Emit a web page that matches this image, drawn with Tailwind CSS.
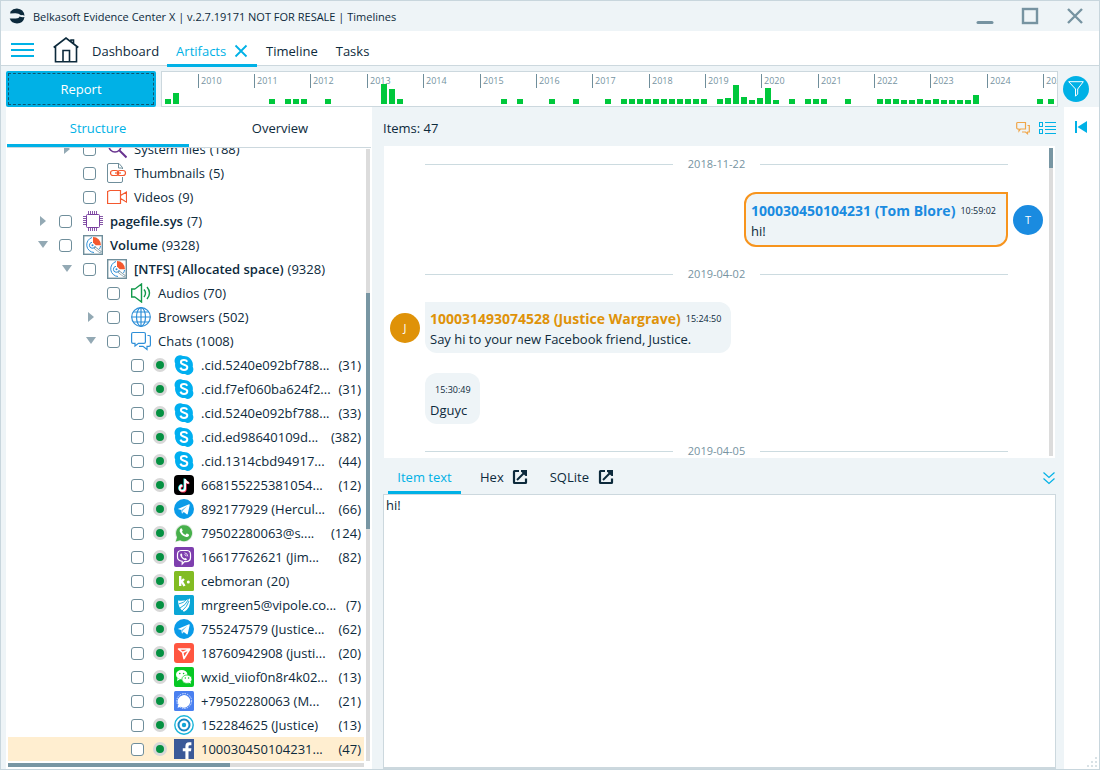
<!DOCTYPE html>
<html lang="en">
<head>
    <meta charset="UTF-8">
    <meta name="viewport" content="width=device-width, initial-scale=1.0">
    <title>Belkasoft Evidence Center X</title>
    <script src="https://cdn.jsdelivr.net/npm/@tailwindcss/browser@4"></script>
</head>
<body class="bg-[#eef4f7] font-['Open_Sans','Noto_Sans',sans-serif] text-[13px] leading-5 text-[#0d2a3c]">

    <!-- Icons shared by the tree and the chat view -->
    <svg class="hidden">
        <symbol id="i-search" viewBox="0 0 20 20"><g fill="none" stroke="#68338f" stroke-width="1.6"><circle cx="8" cy="7" r="6"/><path d="M12.5 11.5l7 7" stroke-width="2"/></g></symbol>
        <symbol id="i-thumb" viewBox="0 0 20 20"><path d="M15.500 6V4.500L12 .5H2Q.5.5.5 2v16q0 1.500 1.500 1.500h12q1.500 0 1.500-1.500v-4M11.500.5V5h4" fill="none" stroke="#6f8e9b"/><g fill="none" stroke="#f4592f" stroke-width="1.200"><rect x="3.500" y="7.500" width="8" height="5" rx="2.500"/><rect x="10.500" y="7.500" width="8" height="5" rx="2.500"/><path d="M8 10h6"/></g></symbol>
        <symbol id="i-video" viewBox="0 0 20 20"><path d="M.6 4.500L3 3.500h10.500v13H.6zM13.500 8.500l6-3.500v10l-6-3.500" fill="none" stroke="#f4592f" stroke-width="1.200"/></symbol>
        <symbol id="i-chip" viewBox="0 0 20 20"><path d="M5.500 0v3M7.500 0v3M9.500 0v3M11.500 0v3M13.500 0v3M5.500 17v3M7.500 17v3M9.500 17v3M11.500 17v3M13.500 17v3M0 5.500h3M0 7.500h3M0 9.500h3M0 11.500h3M0 13.500h3M17 5.500h3M17 7.500h3M17 9.500h3M17 11.500h3M17 13.500h3" stroke="#8757a8"/><rect x="3.500" y="3.500" width="13" height="13" rx="1" fill="#fff" stroke="#7a3f9f"/></symbol>
        <symbol id="i-disk" viewBox="0 0 20 20"><rect x=".7" y=".7" width="18.600" height="18.600" fill="#fff" stroke="#6f8e9b" stroke-width="1.400"/><g fill="none" stroke="#2e8fd8"><path d="M9 2.500a7.700 7.700 0 0 0 2 15M17.500 11a8 8 0 0 1-1 3"/><path d="M9 7.300a3 3 0 1 0 3.300 3.700"/></g><circle cx="9.500" cy="10.300" r="1" fill="#2e8fd8"/><path d="M10 2a8 8 0 0 1 8 8.300h-5.300L10 7.500z" fill="#f4592f"/><path d="M11.500 12.500l6.500 5" stroke="#6f8e9b" stroke-width="2.400"/><path d="M12 13l5.500 4.200" stroke="#fff" stroke-width="1.200"/></symbol>
        <symbol id="i-audio" viewBox="0 0 20 20"><path d="M.7 6v8h3l1.500 1 5.300 4V1L5.200 5l-1.500 1zM13 6.500q3 3.500 0 7.500M16 4q5 6 0 12" fill="none" stroke="#12994b" stroke-width="1.400"/></symbol>
        <symbol id="i-globe" viewBox="0 0 20 20"><g fill="none" stroke="#2e8fd8" stroke-width="1.200"><circle cx="10" cy="10" r="9.300"/><ellipse cx="10" cy="10" rx="4.500" ry="9.300"/><path d="M10 .7v18.600M.7 10h18.600M2.500 5h15M2.500 15h15"/></g></symbol>
        <symbol id="i-chat" viewBox="0 0 20 20"><g fill="none" stroke="#2e8fd8" stroke-width="1.200"><path d="M2 1.500h11q1.400 0 1.400 1.400v8q0 1.400-1.400 1.400H7.500L4 15v-2.700H2q-1.400 0-1.400-1.400v-8Q.6 1.500 2 1.500z"/><path d="M16.500 4.500h1.500q1.400 0 1.400 1.400v8q0 1.400-1.400 1.400h-2V18.500l-4-3.200H8"/></g></symbol>
        <symbol id="i-skype" viewBox="0 0 20 20"><path d="M6 .3a5.500 5.500 0 0 1 3 .7 9 9 0 0 1 9.700 10.800A5.500 5.500 0 0 1 11 19 9 9 0 0 1 1.200 8.500 5.600 5.600 0 0 1 6 .3z" fill="#00aff0"/><path d="M13.300 6.700C12.600 5.500 11.400 5 10 5 8.200 5 6.900 5.900 6.900 7.300c0 3.200 6.400 1.800 6.400 5 0 1.600-1.400 2.600-3.300 2.600-1.800 0-3.100-.8-3.600-2.200" fill="none" stroke="#fff" stroke-width="2"/></symbol>
        <symbol id="i-tiktok" viewBox="0 0 20 20"><rect width="20" height="20" rx="4" fill="#000"/><g fill="none" stroke-width="1.800"><path d="M10.400 3.500v9.200a2.700 2.700 0 1 1-2.700-2.700M10.400 4q.5 3 3.700 3.400" stroke="#25f4ee"/><path d="M11.800 4.700v9.200a2.700 2.700 0 1 1-2.700-2.700M11.800 5q.5 3 3.700 3.400" stroke="#fe2c55"/><path d="M11.100 4v9.200a2.700 2.700 0 1 1-2.700-2.700M11.100 4.500q.5 3 3.700 3.400" stroke="#fff"/></g></symbol>
        <symbol id="i-telegram" viewBox="0 0 20 20"><circle cx="10" cy="10" r="10" fill="#0a9be8"/><path d="M3.800 9.900L15 5.300q.8-.2.7.7l-1.900 8.800q-.3.900-1.100.4l-2.900-2.200-1.500 1.400q-.5.400-.5-.3l-.6-3.100-3.300-1q-.6-.2-.1-.1z" fill="#fff"/><path d="M7.300 11l6-4-4.600 4.800-.5 2.300z" fill="#0a9be8" fill-opacity=".6"/></symbol>
        <symbol id="i-whatsapp" viewBox="0 0 20 20"><path d="M.8 19.500l1.400-5A9 9 0 1 1 6 18.100z" fill="#e4ebe4"/><path d="M1.800 18.400l1.300-4.200a8 8 0 1 1 3 3z" fill="#47b04b"/><path d="M7.300 5.300q.5-.1.700.4l.7 1.700q.1.400-.8 1.400 1.300 2.300 3.500 3.100l1-1.200q.3-.3.700-.1l1.700.9q.5.300.1 1.300-.8 1.400-2.700 1.200-4.400-.8-6.500-5.500-.3-2 .9-3.100z" fill="#fff"/></symbol>
        <symbol id="i-viber" viewBox="0 0 20 20"><rect width="20" height="20" rx="2" fill="#7e3fae"/><path d="M7 3.500h6q3.500.3 3.500 4v3q0 4-4.500 4.200h-1.500L8.200 17v-2.700Q3.500 13.700 3.500 10V7.500q0-3.700 3.500-4z" fill="none" stroke="#fff" stroke-width="1.200"/><path d="M7.300 6.300l1.200 1.800-.6 1q.9 1.900 2.500 2.500l.8-.7 1.800 1.100q-.5 1.500-1.800 1.200-4-1.300-5-5.200 0-1.200 1.100-1.700z" fill="#fff"/><path d="M10.500 5.800q3 .2 3.300 3.600M10.500 7.500q1.500.2 1.700 1.800" fill="none" stroke="#fff" stroke-width=".8"/></symbol>
        <symbol id="i-kik" viewBox="0 0 20 20"><rect width="20" height="20" rx="1.500" fill="#82bc23"/><path d="M6.200 5v10M6.500 11.500L10 8M7.500 10l3 5" stroke="#fff" stroke-width="2.400" fill="none"/><circle cx="14.300" cy="11" r="1.500" fill="#fff"/></symbol>
        <symbol id="i-vipole" viewBox="0 0 20 20"><rect width="20" height="20" rx="1.500" fill="#0ba6d6"/><path d="M4 5.500Q11 6.500 16 3.500 17 13 10 16.800 4 13.500 4 5.500z" fill="#fff"/><path d="M4.500 9Q10 8 12.500 4.500M6 13q5.500-2.500 8.500-8.500M8 16q5-4 7-10" fill="none" stroke="#0ba6d6" stroke-width=".9"/></symbol>
        <symbol id="i-plane" viewBox="0 0 20 20"><rect width="20" height="20" rx="3" fill="#ff5640"/><path d="M4.500 6h11.300L10 15.700 8.700 9.500zM8.700 9.500l6.500-3" fill="none" stroke="#fff" stroke-width="1.600" stroke-linejoin="round"/></symbol>
        <symbol id="i-wechat" viewBox="0 0 20 20"><rect width="20" height="20" rx="2" fill="#07c824"/><ellipse cx="7.700" cy="7.700" rx="5.700" ry="4.800" fill="#fff"/><path d="M3.500 11l-.5 3 3-1.700z" fill="#fff"/><ellipse cx="12.900" cy="12.200" rx="5" ry="4.200" fill="#fff" stroke="#07c824" stroke-width=".7"/><path d="M14.500 15.500l2.500 1.200-.5-2.200z" fill="#fff"/><g fill="#07c824"><circle cx="5.800" cy="6.500" r=".8"/><circle cx="9.600" cy="6.500" r=".8"/><circle cx="11.300" cy="11" r=".7"/><circle cx="14.600" cy="11" r=".7"/></g></symbol>
        <symbol id="i-signal" viewBox="0 0 20 20"><rect width="20" height="20" rx="1.500" fill="#4a80f0"/><path d="M3.500 16.800l1-3.300a6.300 6.300 0 1 1 2.300 2.300z" fill="#fff"/><circle cx="10.200" cy="10" r="7.400" fill="none" stroke="#fff" stroke-width=".8" stroke-dasharray="1.500 1"/></symbol>
        <symbol id="i-target" viewBox="0 0 20 20"><circle cx="10" cy="10" r="9.200" fill="#fff" stroke="#19b5d9" stroke-width="1.400"/><circle cx="10" cy="10" r="5.500" fill="none" stroke="#1787c4" stroke-width="2"/><circle cx="10" cy="10" r="2.200" fill="#12a5d6"/></symbol>
        <symbol id="i-facebook" viewBox="0 0 20 20"><rect width="20" height="20" fill="#3b5998"/><path d="M11.400 20v-7.700H8.800V9.300h2.600V7.200q0-3.900 3.700-3.900h2.300v2.900h-1.500q-1.400 0-1.400 1.400v1.700h2.900l-.4 3h-2.500V20z" fill="#fff"/></symbol>
        <symbol id="i-open" viewBox="0 0 16 16"><path d="M7 2H2.500Q2 2 2 2.500v11q0 .5.5.5h11q.5 0 .5-.5V9.500" fill="none" stroke="#0d2a3c" stroke-width="2.200"/><path d="M5 11l8-8" stroke="#0d2a3c" stroke-width="2"/><path d="M9 1h6v6h-1.500L9 2.500z" fill="#0d2a3c"/></symbol>
    </svg>

    <div class="flex h-screen flex-col border border-[#c8d6dd]">

        <header class="flex h-[30px] shrink-0 items-center px-2">
            <svg class="size-4 shrink-0" viewBox="0 0 16 16"><path d="M1.500 3.500Q4 .5 8 .6q6.800.5 7.500 7.200-2-1.300-3.500-.6Q9.500 5 6 5.200L1.200 5.500z" fill="#0d2a3c"/><path d="M.7 10.500h6q3.500-.2 3.800-2 2.500 1 5 .5Q14.500 15.300 8 15.500 2.500 15.300.7 10.500z" fill="#0d2a3c"/></svg>
            <h1 class="ml-2 grow pt-px text-[11px]">Belkasoft Evidence Center X | v.2.7.19171 NOT FOR RESALE | Timelines</h1>
            <div class="flex items-center gap-[27px] pr-[7px]">
                <button aria-label="Minimize"><svg class="size-[18px]" viewBox="0 0 18 18"><path d="M2 15.500h14" stroke="#7693a1" stroke-width="3" stroke-linecap="round"/></svg></button>
                <button aria-label="Maximize"><svg class="size-[18px]" viewBox="0 0 18 18"><rect x="2" y="2" width="14" height="14" fill="none" stroke="#7693a1" stroke-width="2.400"/></svg></button>
                <button aria-label="Close"><svg class="size-[18px]" viewBox="0 0 18 18"><path d="M2 2l14 14M16 2L2 16" stroke="#7693a1" stroke-width="2.400"/></svg></button>
            </div>
        </header>

        <nav class="flex h-[35px] shrink-0 border-b border-[#ccd8de] bg-white pl-[10px]">
            <button aria-label="Menu" class="mr-[19px] flex items-center pt-1"><svg class="h-4 w-[23px]" viewBox="0 0 23 16"><path d="M0 2h23M0 8h23M0 14h23" stroke="#00b1e6" stroke-width="2"/></svg></button>
            <a href="#" aria-label="Home" class="mr-[13px] flex items-center pt-1"><svg class="size-[26px]" viewBox="0 0 26 26"><path d="M2.500 9v15.700h21V9M.7 10.500L13 1l12.300 9.500M18 4.500V3h2.500v3.500M10 24.500v-11h6.500v11" fill="none" stroke="#0d2a3c" stroke-width="1.600"/></svg></a>
            <a href="#" class="mr-2 flex items-center pt-[6px]">Dashboard</a>
            <div class="-mb-[2px] flex w-[90px] items-center border-b-3 border-[#00b1e6] pt-[7px] pl-[9px] text-[#00b1e6]">
                <a href="#">Artifacts</a>
                <button aria-label="Close tab" class="ml-2"><svg class="size-[14px]" viewBox="0 0 14 14"><path d="M1.500 1.500l11 11M12.500 1.500l-11 11" stroke="#00b1e6" stroke-width="1.800"/></svg></button>
            </div>
            <a href="#" class="ml-[9px] flex items-center pt-[6px]">Timeline</a>
            <a href="#" class="ml-[18px] flex items-center pt-[6px]">Tasks</a>
        </nav>

        <div class="flex h-[41px] shrink-0 items-end pl-[5px]">
            <button class="h-9 w-[150px] shrink-0 rounded-[2px] bg-[#00b1e6] p-[2px] text-white"><span class="flex h-full items-center justify-center border border-dashed border-[#10566f]">Report</span></button>
            <div class="ml-[5px] h-9 min-w-0 grow border border-[#ccd8de] bg-white">
                <svg id="timeline" class="block size-full"></svg>
            </div>
            <button aria-label="Filter" class="mr-[10px] mb-[5px] ml-[5px] flex size-[26px] items-center justify-center rounded-full bg-[#00b1e6]">
                <svg class="size-4" viewBox="0 0 16 16"><path d="M.7.700h14.600L9.700 8v5l-2.200 2.200V8z" fill="none" stroke="#fff"/></svg>
            </button>
        </div>

        <main class="flex min-h-0 grow">
            <section class="ml-[5px] flex w-[366px] shrink-0 flex-col bg-white pl-px">
                <div class="mr-px flex h-[41px] shrink-0 border-b border-[#ccd8de]">
                    <button class="w-[182px] border-b-3 border-[#00b1e6] pt-1 text-[#00b1e6]">Structure</button>
                    <button class="grow border-b-3 border-transparent pt-1">Overview</button>
                </div>
                <div class="ml-px flex min-h-0 grow overflow-hidden pt-px">
                    <ul id="tree" class="-mt-3 min-w-0 grow"></ul>
                    <div class="mr-[2px] ml-[2px] h-[612px] w-1 bg-[#dcdcdc]"><div class="mt-[144px] h-[236px] w-full bg-[#7896a3]"></div></div>
                </div>
                <div class="mr-2 mb-[2px] ml-px h-1 shrink-0 bg-[#dcdcdc]"><div class="h-full w-[222px] bg-[#7896a3]"></div></div>
            </section>

            <section class="flex min-w-0 grow flex-col pl-[11px]">
                <div class="flex h-[39px] shrink-0 items-center pt-[2px] pr-2">
                    <h2 class="grow">Items: 47</h2>
                    <button aria-label="Chat view" class="mr-2"><svg class="size-[14px]" viewBox="0 0 14 14"><g fill="none" stroke="#f0a64a" stroke-width="1.200"><path d="M1.500 1.500h8v6.500h-5L3 10V8H1.500L.7 7V2z"/><path d="M11.500 4.500h1.800v6.500h-1.800v1.700L9.500 11H6"/></g></svg></button>
                    <button aria-label="List view"><svg class="h-[14px] w-[18px]" viewBox="0 0 18 14"><g fill="none" stroke="#00b1e6"><rect x="1.500" y="1.500" width="3" height="4"/><rect x="1.500" y="8.500" width="3" height="4"/><path d="M7 1.500h11M7 5.500h11M7 8.500h11M7 12.500h11"/></g></svg></button>
                </div>

                <div class="mr-[9px] ml-px flex h-[312px] shrink-0 overflow-hidden bg-white">
                    <div class="flex min-w-0 grow flex-col pt-2">
                        <div class="mx-[41px] flex items-center gap-[15px] text-[11px] text-[#7693a1]"><hr class="grow border-[#ccdbe0]">2018-11-22<hr class="grow border-[#ccdbe0]"></div>
                        <div class="mt-[18px] flex items-center justify-end gap-[5px] pr-[6px]">
                            <article class="rounded-xl rounded-tr-none border-2 border-[#f7941d] bg-[#eef4f7] px-[5px] pt-[7px] pb-1">
                                <p class="flex h-5 items-center gap-[5px] pr-[5px]"><b class="text-[14px] text-[#1a8be0]">100030450104231 (Tom Blore)</b> <time class="text-[9px]">10:59:02</time></p>
                                <p>hi!</p>
                            </article>
                            <span class="flex size-[30px] shrink-0 items-center justify-center rounded-full bg-[#1a8be0] text-[11px] text-white">T</span>
                        </div>
                        <div class="mx-[41px] mt-[17px] flex items-center gap-[15px] text-[11px] text-[#7693a1]"><hr class="grow border-[#ccdbe0]">2019-04-02<hr class="grow border-[#ccdbe0]"></div>
                        <div class="mt-[18px] flex items-center gap-[5px] pl-[6px]">
                            <span class="flex size-[30px] shrink-0 items-center justify-center rounded-full bg-[#df9208] text-[11px] text-white">J</span>
                            <article class="rounded-xl rounded-tl-none bg-[#eef4f7] px-[5px] pt-[7px] pb-1">
                                <p class="flex h-5 items-center gap-[5px] pr-[5px]"><b class="text-[14px] text-[#df9208]">100031493074528 (Justice Wargrave)</b> <time class="text-[9px]">15:24:50</time></p>
                                <p>Say hi to your new Facebook friend, Justice.</p>
                            </article>
                        </div>
                        <article class="mt-5 ml-[41px] self-start rounded-xl bg-[#eef4f7] px-[5px] pt-[7px] pb-1">
                            <p class="flex h-5 items-center pr-[4px] pl-[5px]"><time class="text-[9px]">15:30:49</time></p>
                            <p>Dguyc</p>
                        </article>
                        <div class="mx-[41px] mt-[17px] flex items-center gap-[15px] text-[11px] text-[#7693a1]"><hr class="grow border-[#ccdbe0]">2019-04-05<hr class="grow border-[#ccdbe0]"></div>
                    </div>
                    <div class="my-[2px] mr-[2px] w-1 shrink-0 bg-[#dcdcdc]"><div class="h-5 w-full bg-[#7896a3]"></div></div>
                </div>

                <div class="flex h-9 shrink-0 pr-2 pl-[5px]">
                    <button class="w-[73px] border-b-3 border-[#00b1e6] pt-1 text-[#00b1e6]">Item text</button>
                    <button class="ml-[19px] flex items-center gap-2 pt-[2px]">Hex <svg class="size-4"><use href="#i-open"/></svg></button>
                    <button class="ml-[22px] flex items-center gap-[9px] pt-[2px]">SQLite <svg class="size-4"><use href="#i-open"/></svg></button>
                    <button aria-label="Collapse" class="ml-auto flex items-center pt-1"><svg class="size-[14px]" viewBox="0 0 14 14"><path d="M1.500 1.500L7 6.500l5.500-5M1.500 7.500l5.500 5 5.500-5" fill="none" stroke="#00b1e6" stroke-width="1.200"/></svg></button>
                </div>
                <textarea aria-label="Item text" class="mr-2 min-h-0 grow resize-none border border-b-2 border-[#ccd8de] bg-white px-[2px] outline-none">hi!</textarea>
            </section>

            <aside class="flex w-[35px] shrink-0 flex-col justify-between bg-white">
                <button aria-label="Expand panel" class="mt-[13px] ml-[10px]"><svg class="size-[14px]" viewBox="0 0 14 14"><path d="M2 1v12" stroke="#00b1e6" stroke-width="2"/><path d="M13 1v12L3.500 7z" fill="#00b1e6"/></svg></button>
                <svg class="mr-[2px] mb-[2px] size-[10px] self-end" viewBox="0 0 10 10"><path d="M8 0h2v2H8zM4 4h2v2H4zM8 4h2v2H8zM0 8h2v2H0zM4 8h2v2H4zM8 8h2v2H8z" fill="#d9e2e6"/></svg>
            </aside>
        </main>
    </div>

    <script>
        // level, arrow, icon, name, count, bold
        const rows = [
            [1, "right", "search", "System files", 188],
            [1, "", "thumb", "Thumbnails", 5],
            [1, "", "video", "Videos", 9],
            [0, "right", "chip", "pagefile.sys", 7, true],
            [0, "down", "disk", "Volume", 9328, true],
            [1, "down", "disk", "[NTFS] (Allocated space)", 9328, true],
            [2, "", "audio", "Audios", 70],
            [2, "right", "globe", "Browsers", 502],
            [2, "down", "chat", "Chats", 1008],
            [3, "", "skype", ".cid.5240e092bf788...", 31],
            [3, "", "skype", ".cid.f7ef060ba624f2...", 31],
            [3, "", "skype", ".cid.5240e092bf788...", 33],
            [3, "", "skype", ".cid.ed98640109d...", 382],
            [3, "", "skype", ".cid.1314cbd94917...", 44],
            [3, "", "tiktok", "668155225381054...", 12],
            [3, "", "telegram", "892177929 (Hercul...", 66],
            [3, "", "whatsapp", "79502280063@s....", 124],
            [3, "", "viber", "16617762621 (Jim...", 82],
            [3, "", "kik", "cebmoran", 20],
            [3, "", "vipole", "mrgreen5@vipole.co...", 7],
            [3, "", "telegram", "755247579 (Justice...", 62],
            [3, "", "plane", "18760942908 (justi...", 20],
            [3, "", "wechat", "wxid_viiof0n8r4k02...", 13],
            [3, "", "signal", "+79502280063 (M...", 21],
            [3, "", "target", "152284625 (Justice)", 13],
            [3, "", "facebook", "100030450104231...", 47],
        ];
        const indent = ["pl-[27px]", "pl-[51px]", "pl-[75px]", "pl-[99px]"];
        const arrows = {
            right: '<button aria-label="Expand" class="flex w-4 justify-center"><svg class="size-2.5" viewBox="0 0 10 10"><path d="M2 0v10l6-5z" fill="#93a9b4"/></svg></button>',
            down: '<button aria-label="Collapse" class="flex w-4 justify-center"><svg class="size-2.5" viewBox="0 0 10 10"><path d="M0 1h10L5 8z" fill="#93a9b4"/></svg></button>',
            "": '<span class="w-4"></span>',
        };

        document.getElementById("tree").innerHTML = rows.map(([level, arrow, icon, name, count, bold]) => {
            const chat = level === 3;
            const selected = icon === "facebook";
            return `<li class="flex h-6 items-center gap-2 pr-[3px] whitespace-nowrap ${indent[level]} ${selected ? "bg-[#ffeed0]" : ""}">
                ${arrows[arrow]}
                <label class="flex min-w-0 grow items-center">
                    <input type="checkbox" class="size-[13px] shrink-0 appearance-none rounded-[3px] border border-[#6f8e9b] bg-white">
                    ${chat ? '<span class="ml-[9px] size-[14px] shrink-0 rounded-full border-3 border-[#d8d8d8] bg-[#059142]"></span>' : ""}
                    <svg class="size-5 shrink-0 ${chat ? "ml-[7px]" : "ml-[11px]"}"><use href="#i-${icon}"/></svg>
                    <span class="ml-[7px] ${bold ? "font-semibold" : ""}">${name}</span>
                    <span class="${chat && icon !== "kik" ? "ml-auto" : "ml-1"}">(${count})</span>
                </label>
            </li>`;
        }).join("");

        // year ticks and activity bars, x measured from the start of the strip
        const ticks = [36, 92, 148, 205, 261, 318, 374, 430, 487, 543, 599, 656, 712, 768, 825, 881];
        const bars = [
            [3, 5], [11, 11], [107, 5], [123, 5], [131, 5], [139, 5], [163, 5], [219, 20], [227, 15], [235, 5],
            [339, 5], [355, 5], [387, 5], [411, 5], [443, 5], [459, 5], [467, 5], [475, 5], [483, 5], [491, 5],
            [499, 5], [507, 5], [515, 5], [523, 5], [531, 5], [539, 5], [555, 5], [563, 6], [571, 19], [579, 7],
            [587, 4], [595, 6], [603, 16], [611, 4], [627, 5], [643, 5], [651, 5], [659, 5], [683, 5], [715, 5],
            [723, 5], [731, 5], [739, 4], [747, 4], [755, 5], [763, 4], [771, 5], [779, 4], [787, 4], [795, 4],
            [803, 4], [811, 9], [875, 5], [886, 5],
        ];
        document.getElementById("timeline").innerHTML =
            ticks.map((x, i) => `<rect x="${x}" y="2" width="1" height="14" fill="#6f8e9b"/><text x="${x + 3}" y="12" class="fill-[#7693a1] text-[9px]">${2010 + i}</text>`).join("") +
            bars.map(([x, h]) => `<rect x="${x}" y="${32 - h}" width="6" height="${h}" fill="#00c83c"/>`).join("");
    </script>

</body>
</html>
